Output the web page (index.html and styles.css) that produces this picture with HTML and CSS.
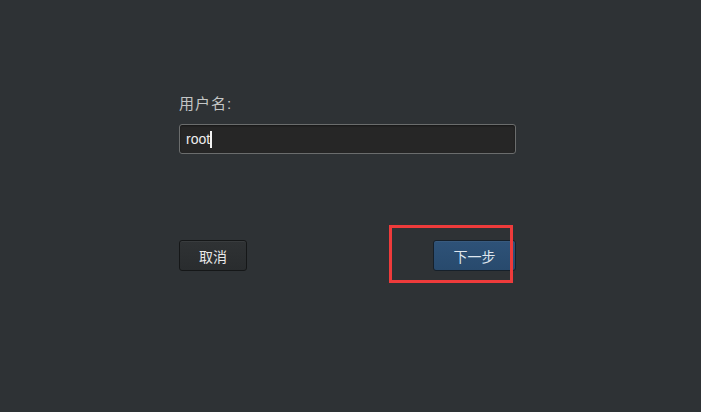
FILE: index.html
```html
<!DOCTYPE html>
<html lang="zh-CN">
<head>
  <meta charset="UTF-8">
  <title>登录</title>
  <link rel="stylesheet" href="styles.css">
</head>
<body>
  <div class="login">
    <label class="field-label" for="user">用户名:</label>
    <div class="input"><span class="value">root</span><span class="caret"></span></div>

    <div class="actions">
      <button class="btn">取消</button>
      <div class="next-wrap">
        <button class="btn btn-primary">下一步</button>
        <span class="highlight"></span>
      </div>
    </div>
  </div>
</body>
</html>
```

FILE: styles.css
```css
* {
  box-sizing: border-box;
}

html, body {
  height: 100%;
}

body {
  margin: 0;
  background: #2e3235;
  font-family: "Liberation Sans", "Noto Sans CJK SC", sans-serif;
  color: #ddd;
}

.login {
  width: 337px;
  margin-left: 179px;
  padding-top: 94px;
  display: flex;
  flex-direction: column;
}

.field-label {
  font-size: 15px;
  color: #c4c6c6;
  line-height: 20px;
  letter-spacing: 1px;
}

.input {
  margin-top: 10px;
  height: 30px;
  background: #262626;
  border: 1px solid #6b6d6d;
  border-radius: 3px;
  display: flex;
  align-items: center;
  padding-left: 6px;
  box-shadow: inset 0 1px 2px rgba(0, 0, 0, 0.4);
}

.value {
  font-size: 14px;
  color: #eee;
}

.caret {
  width: 2px;
  height: 17px;
  background: #f2f2f2;
}

.actions {
  margin-top: 86px;
  display: flex;
  justify-content: space-between;
  align-items: flex-start;
}

.btn {
  height: 31px;
  width: 68px;
  font-family: "Liberation Sans", "Noto Sans CJK SC", sans-serif;
  font-size: 14px;
  color: #e8e8e8;
  background: linear-gradient(#2f3234, #292c2e);
  border: 1px solid #151718;
  border-radius: 3px;
  box-shadow: inset 0 1px 0 rgba(255, 255, 255, 0.05);
  padding: 0;
}

.next-wrap {
  position: relative;
}

.btn-primary {
  width: 83px;
  background: linear-gradient(#2e5278, #284a6d);
  border-color: #16202a;
  color: #dfe6ee;
}

.highlight {
  position: absolute;
  left: -44px;
  top: -15px;
  width: 124px;
  height: 58px;
  border: 3px solid #ee3b3b;
  pointer-events: none;
}
```
